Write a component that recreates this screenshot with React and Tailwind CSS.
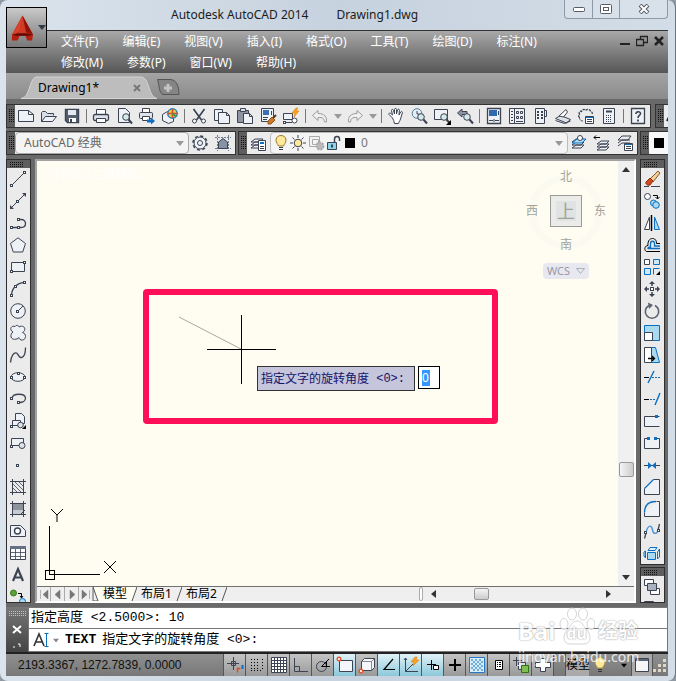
import clsx from 'clsx';

const INK = '#3c4352';
const BLUE = '#0a6fc2';
const SKY = '#a9daf0';
const PALE = '#eef1f5';

function Icon({ children, stroke = INK }) {
  return (
    <svg width="16" height="16" viewBox="0 0 16 16" fill="none" stroke={stroke} className="shrink-0 overflow-visible" aria-hidden="true">
      {children}
    </svg>
  );
}

// small square used as a grip handle on drawing tools
function Node({ x, y, color = INK, fill = '#fff' }) {
  return <rect x={Math.floor(x) - 0.5} y={Math.floor(y) - 0.5} width="2" height="2" stroke={color} fill={fill} />;
}

const lens = (
  <>
    <circle cx="10" cy="9" r="3.3" fill="#d5e9e8" />
    <path d="M12.5 11.5l3.500 4" strokeWidth="2" />
  </>
);

const standardTools = [
  { name: 'New', icon: <path d="M.5 2.500h10l5 4v7H.5z M10.500 2.500v4h5" fill={PALE} /> },
  { name: 'Open', icon: <><path d="M.5 13.500v-9l1-1h3l2 2h6v2" fill="#d7dde5" /><path d="M.5 13.500l4-5h11l-4 5z" fill={PALE} /></> },
  { name: 'Save', icon: <><path d="M1.500 1.500h13v13h-11l-2-2z" fill="#566073" strokeWidth="1.400" /><path d="M4 2h8v5H4z" fill="#e6eaf0" stroke="none" /><path d="M5 10h7v4H5z" fill="#fff" stroke="none" /><path d="M7 11v3" strokeWidth="2" /></> },
  null,
  { name: 'Plot', icon: <><path d="M3.500 6.500v-5h9v5" fill="#fff" /><rect x=".5" y="6.500" width="15" height="6" rx="1.500" fill="#dfe3e9" strokeWidth="1.300" /><path d="M3.500 10.500h9v4h-9z" fill="#fff" /></> },
  { name: 'Plot Preview', icon: <><path d="M2.500 14.500v-14h7l4 4v10z" fill={PALE} />{lens}</> },
  { name: 'Publish', icon: <><path d="M3.500 4.500v-4h7v4" fill="#fff" /><rect x=".5" y="4.500" width="13" height="6" rx="1" fill="#dfe3e9" /><path d="M3.500 8.500h7v4h-7z" fill="#fff" /><path d="M8 11.500h4v-2l4 3.500-4 3.500v-2H8z" fill={BLUE} stroke="none" /></> },
  { name: '3DPrint', icon: <><path d="M.5 6.500l5-3 6 2v8l-5 2-6-3z" fill={PALE} /><circle cx="10.500" cy="5.500" r="4.700" fill="#eecb4c" stroke="#2a7fb8" strokeWidth="1.500" /><path d="M10.500 1v9M6 5.500h9" stroke="#d6502c" strokeWidth="1.600" /><path d="M10.500 5.500l3.500 3" stroke="#3aa04a" strokeWidth="2" /></> },
  null,
  { name: 'Cut', icon: <><path d="M2.500 1l8 11M13.500 1l-8 11" strokeWidth="1.700" /><circle cx="3.500" cy="13" r="2" fill="#fff" /><circle cx="12.500" cy="13" r="2" fill="#fff" /></> },
  { name: 'Copy', icon: <><path d="M.5 1.500h8v11h-8z" fill={PALE} /><path d="M4.500 4.500h8l3 3v8h-11z M12.500 4.500v3h3" fill={PALE} /></> },
  { name: 'Paste', icon: <><path d="M.5 2.500h11v12H.5z" fill="#8d95a3" /><path d="M3.500.5h5v3h-5z" fill="#dfe3e9" /><path d="M6.500 5.500h6l3 3v7h-9z M12.500 5.500v3h3" fill={PALE} /></> },
  { name: 'Match Properties', icon: <><path d="M1.500.5h12v13h-12z" fill={PALE} /><path d="M3 2h6v5H3z" fill="#3c6fb0" stroke="none" /><path d="M11.500 3v4M3 9.500h5M3 11.500h4" /><path d="M8 13l4-4 3 3-4 4H8z" fill="#c97a2c" stroke="#9a5517" /><path d="M13 10l3-3" stroke="#5a3a1c" strokeWidth="2" /></> },
  { name: 'Block Editor', icon: <><path d="M.5 5.500h9v6h-9z" fill={PALE} /><circle cx="11.500" cy="12.500" r="2.500" fill="#fff" /><Node x="1" y="14" /><path d="M3 14.500h6" /><path d="M13 0l-4 5h3l-1 4 5-6h-3l2-3z" fill="#f8a51b" stroke="#e07c10" strokeWidth=".6" /></> },
  null,
  { name: 'Undo', icon: <path d="M6 2.500l-5.500 5 5.500 5v-3c5-.5 6 1 6.500 4.500h2c.5-5-2-8.500-8.500-8.500z" stroke="#9a9a9a" fill="#f1f1f1" /> },
  'caret',
  { name: 'Redo', icon: <path d="M10 2.500l5.500 5-5.500 5v-3c-5-.5-6 1-6.500 4.500h-2C1 9 3.500 5.500 10 5.500z" stroke="#9a9a9a" fill="#f1f1f1" /> },
  'caret',
  null,
  { name: 'Pan', icon: <path d="M4.500 10L1 6.500c-.8-1 .8-2 1.800-1L4.500 7 3.500 2.500c0-1.500 1.800-1.500 2 0L6.500 6V1.500c0-1.500 2-1.500 2 0V6l1-4c.4-1.300 2-1 1.900.3L11 7l1.700-3c.8-1 2.100-.3 1.700.8L12.500 11c-.5 2-1.500 2.500-2 4.500h-4c-.5-2-1-4-2-5.500z" fill="#fff" /> },
  { name: 'Zoom Realtime', icon: <><circle cx="6" cy="5.500" r="4.800" fill="#e3eef6" stroke="#5c7a94" /><path d="M6 3v3h2.500" />{lens}</> },
  { name: 'Zoom Window', icon: <><path d="M.5 1.500h13v10H.5z" fill={PALE} />{lens}<path d="M17 12v5h-5z" fill="#000" stroke="none" /></> },
  { name: 'Zoom Previous', icon: <><path d="M5 1L.5 5 5 9V6.500h5v-3H5z" fill="#8d95a3" />{lens}</> },
  null,
  { name: 'Properties', icon: <><path d="M1.500.5h13v15h-13z" fill={PALE} strokeWidth="1.300" /><path d="M3 2h8v6H3z" fill="#2f6ab0" stroke="none" /><path d="M12.500 3v4" /><path d="M3 12.500h4M9 12.500h4M8 11v3" /></> },
  { name: 'DesignCenter', icon: <><path d="M.5.5h15v15H.5z M5.500 1v14" fill={PALE} /><path d="M2 3.500h2M2 6.500h2M2 9.500h2M2 12.500h2" /><path d="M7.500 3.500h2v2h-2zM11.500 3.500h2v2h-2zM7.500 8.500h2v2h-2zM11.500 8.500h2v2h-2z" /><path d="M7 13.500h7" /></> },
  { name: 'Tool Palettes', icon: <><path d="M3.500.5h9v15h-9zM12.500 2.500h2v6h-2" fill={PALE} /><path d="M5 4h2M9 4h2M5 7h2M9 7h2M5 10h2M9 10h2" strokeWidth="2" /></> },
  { name: 'Sheet Set Manager', icon: <><path d="M.5 10.500l5-3 10 4-4 3.500z" fill="#dfe3e9" /><path d="M.5 12.500l9 3 6-2.500" /><path d="M4 8l7-6.500 1.500 2.500-4 5z" fill="#fff" /></> },
  { name: 'Markup Set Manager', icon: <><path d="M1.500 9.500c-2-2 0-3 0-3-1-2 0-4 2-3 1-3 4-2 4-1 2-2 5-1 5 1 2 0 2 2 1.500 3" strokeDasharray="2.500 1" strokeWidth="1.300" /><path d="M1.500 9c0 3 1 4 4 4" strokeDasharray="2.500 1" /><path d="M7.500 8.500h8v7h-8z" fill="#fff" /><path d="M8 9.500h7" stroke={BLUE} /><path d="M9 11.500h5M9 13.500h5" /></> },
  { name: 'QuickCalc', icon: <><path d="M2.500.5h11v15h-11z" fill={PALE} /><path d="M5 3.500h6" strokeWidth="2" /><path d="M5 7.500h6M5 9.500h6M5 11.500h6M5 13.500h6" strokeDasharray="1 1" /></> },
  null,
  { name: 'Help', icon: <><path d="M1.500.5h13v15h-13z" fill={PALE} strokeWidth="1.300" /><path d="M6 6c0-3 4.500-3 4.500-.5C10.500 7.500 8 7.500 8 10" strokeWidth="1.600" /><path d="M8 11.500v2" strokeWidth="1.800" /></> },
];

const drawTools = [
  { name: 'Line', icon: <><path d="M2 14L14 2" /><Node x="1" y="14" /><Node x="14" y="1" /></> },
  { name: 'Construction Line', icon: <><path d="M1 15L15 1" /><path d="M0 16v-4l4 4zM16 0v4l-4-4z" fill={INK} stroke="none" /><Node x="7" y="8" /></> },
  { name: 'Polyline', icon: <><path d="M2 12.500h9c6 0 6-8 0-8H8" strokeWidth="1.300" /><Node x="1" y="12" /><Node x="8" y="12" /><Node x="8" y="4" /></> },
  { name: 'Polygon', icon: <path d="M8 .8l7.500 5.700-2.800 8.500H3.300L.5 6.500z" fill={PALE} /> },
  { name: 'Rectangle', icon: <><path d="M1.500 3.500h13v9h-13z" fill={PALE} /><Node x="1" y="12" /><Node x="14" y="3" /></> },
  { name: 'Arc', icon: <><path d="M1.500 14C2 7 7 2 14 1.500" strokeWidth="1.300" /><Node x="1" y="14" /><Node x="5" y="5" /><Node x="14" y="1" /></> },
  { name: 'Circle', icon: <><circle cx="8" cy="8" r="7.300" fill={PALE} /><path d="M8 8l5-5" /><Node x="7" y="8" /></> },
  { name: 'Revision Cloud', icon: <path d="M3 7C-1 5 1 0 5 1.500c1.500-2 4-1 4 .5 3-2 7 0 5.500 3.500-.5 1.500-2 2-2 2 4 1 4 7 0 7.500-2 .3-3.500-1-3.500-2.500C7 15 2 15 1 12c-.5-2 .5-4 2-5z" fill={PALE} /> },
  { name: 'Spline', icon: <path d="M.5 15.500C1 9 4 5 6.500 6c2 1 2 5 5 4.500 3-.5 4-6 4-10" strokeWidth="1.300" /> },
  { name: 'Ellipse', icon: <><ellipse cx="8" cy="8" rx="7" ry="4.300" fill={PALE} /><Node x="1" y="8" /><Node x="14" y="8" /><Node x="8" y="4" /></> },
  { name: 'Ellipse Arc', icon: <><path d="M2 7c1-5 13-5 13.500 0 0 3-3 4.500-6 4.500" strokeWidth="1.300" /><Node x="1" y="7" /><Node x="8" y="11" /></> },
  { name: 'Insert Block', icon: <><path d="M5.500 9V.5h6l3 3v7h-3" fill={PALE} /><path d="M2.500 7.500h8v5h-8z" fill={PALE} /><circle cx="10.500" cy="12" r="2.800" fill="#dfe3e9" /><Node x="1" y="13" /><path d="M16 12v4h-4z" fill="#000" stroke="none" /></> },
  { name: 'Make Block', icon: <><path d="M1.500 3.500h12v7h-12z" fill={PALE} /><circle cx="12" cy="10.500" r="3" fill="#dfe3e9" /><Node x="1" y="11" /></> },
  { name: 'Point', icon: <Node x="7" y="8" /> },
  { name: 'Hatch', icon: <><path d="M0 2.500h16M0 13.500h16M2.500 0v16M13.500 0v16" /><path d="M3 9l4 4M3 5l8 8M5 3l8 8M9 3l4 4" strokeWidth=".8" /></> },
  { name: 'Gradient', icon: <><path d="M3 3h10v10H3z" fill="#8c939d" stroke="none" /><path d="M3 9h10v4H3z" fill="#c7cbd1" stroke="none" /><path d="M0 2.500h16M0 13.500h16M2.500 0v16M13.500 0v16M10 14l5-5" /></> },
  { name: 'Region', icon: <><path d="M.5 2.500h10l5 5v6H.5z" fill={PALE} /><circle cx="7.500" cy="8" r="3" fill="#fff" strokeWidth="1.400" /></> },
  { name: 'Table', icon: <><path d="M.5 1.500h15v13H.5z" fill="#fff" /><path d="M0 2.500h16" strokeWidth="3" stroke="#657286" /><path d="M1 7.500h14M1 11.500h14M5.500 4v10M10.500 4v10" strokeWidth=".8" /></> },
  { name: 'Multiline Text', icon: <path d="M3 14L8 2l5 12M5 10.500h6" strokeWidth="2.200" /> },
  { name: 'Add Selected', icon: <><circle cx="3.500" cy="4" r="3" fill="#5ba33b" stroke="#3c7a22" /><path d="M8 4.500h3.500v4M10 7l1.500 2L13 7" stroke="#000" /><circle cx="12.500" cy="12.500" r="3" fill={SKY} stroke={BLUE} /></> },
];

const modifyTools = [
  { name: 'Erase', icon: <><path d="M0 15.500h5M7 15.500h9" /><path d="M6 8l8-8 2 2-7 9z" fill="#f4cf98" stroke="#85592b" /><path d="M2 11l4-4 3 3-3 4c-2 1-5-1-4-3z" fill="#cf4a1e" stroke="#8e2b0d" /></> },
  { name: 'Copy', icon: <><circle cx="3.500" cy="3.500" r="3" fill="#fff" /><path d="M9 2.500h4.500v3M11.500 4l2 2 2-2" stroke="#000" /><circle cx="9.500" cy="10" r="3" fill={SKY} stroke={BLUE} /><circle cx="12" cy="12" r="3.300" fill={SKY} stroke={BLUE} /></> },
  { name: 'Mirror', icon: <><path d="M5.500 2v12.500h-5z" fill="#fff" /><path d="M7.500 0v16" stroke="#000" strokeWidth="1.500" /><path d="M10.500 2v12.500h5z" fill={SKY} stroke={BLUE} /></> },
  { name: 'Offset', icon: <><path d="M16 14.500H3C0 14.500 0 8.500 4 8.500 3-.5 13-.5 12.500 6.500H16" stroke="#000" /><path d="M16 11.500H4.500c-1 0-1-1.500 2-1.500V6.500c0-3 4-3 4 0V9H16" stroke={BLUE} strokeWidth="1.300" /></> },
  { name: 'Array', icon: <><path d="M.5.5h5v5h-5z" fill="#fff" /><path d="M9.500.5h6v5h-6zM.5 9.500h6v6h-6z" fill="#cfeaf6" stroke={BLUE} /><path d="M9.500 15.500v-6h6" stroke={BLUE} /><path d="M16 12v4h-4z" fill="#000" stroke="none" /></> },
  { name: 'Move', icon: <><path d="M8 2v3M8 11v3M2 8h3M11 8h3" strokeWidth="1.500" /><path d="M8 0l3 3H5zM8 16l3-3H5zM0 8l3-3v6zM16 8l-3-3v6z" fill={INK} stroke="none" /><rect x="6.500" y="6.500" width="3" height="3" fill="#fff" /></> },
  { name: 'Rotate', icon: <><path d="M5 2.500A6.700 6.700 0 1 0 11 2.500" strokeWidth="1.600" stroke="#5c6370" /><path d="M4-.5l5 2.500-4 4z" fill="#5c6370" stroke="none" /></> },
  { name: 'Scale', icon: <><path d="M.5.5h15v15H.5z" fill={SKY} stroke={BLUE} /><path d="M.5 7.500h8v8h-8z" fill="#fff" /></> },
  { name: 'Stretch', icon: <><path d="M7.500.5h4l4 15h-8z" fill={SKY} stroke={BLUE} /><path d="M.5.5h7v15h-7z" fill="#fff" /><path d="M4 11.500h6M8 9l2.500 2.500L8 14" stroke="#000" strokeWidth="1.300" /></> },
  { name: 'Trim', icon: <><path d="M4 14l6-12" stroke={BLUE} strokeWidth="1.400" /><path d="M0 8.500h5" stroke="#000" /><path d="M8 8.500h8" stroke={BLUE} strokeDasharray="2 1" /></> },
  { name: 'Extend', icon: <><path d="M0 8.500h5" stroke="#000" /><path d="M6 8.500h5" stroke={BLUE} strokeDasharray="2 1" /><path d="M11 14l5-12" stroke={BLUE} strokeWidth="1.400" /></> },
  { name: 'Break at Point', icon: <><path d="M15.500 3.500H.5v10h15" fill={PALE} /><path d="M11 2h3v3h-3z" fill={BLUE} stroke="none" /></> },
  { name: 'Break', icon: <><path d="M4 3.500H.5v10h15v-10H12" fill={PALE} /><path d="M3 2h3v3H3zM10 2h3v3h-3z" fill={BLUE} stroke="none" /></> },
  { name: 'Join', icon: <><path d="M0 8.500h16" /><path d="M4 5l4 3.500L4 12zM12 5L8 8.500l4 3.500z" fill={BLUE} stroke="none" /></> },
  { name: 'Chamfer', icon: <><path d="M9.500.5h6v15H.5v-6" fill={PALE} /><path d="M.5 9.500l9-9" stroke={BLUE} strokeWidth="1.300" /></> },
  { name: 'Fillet', icon: <><path d="M12.500.5h3v15H.5v-4" fill={PALE} /><path d="M.5 11.500C.5 5 4 .5 12 .5" stroke={BLUE} strokeWidth="1.300" /></> },
  { name: 'Blend Curves', icon: <><path d="M.5 15.500L2 10M14 7l1.500-6" strokeWidth="1.300" /><path d="M2 9C5 0 8 3 8.500 7c1 5 5 4 5.500 0" stroke="#4a94dc" strokeWidth="1.400" /><Node x="1" y="9" /><Node x="14" y="7" /></> },
  { name: 'Explode', icon: <g stroke={BLUE}><path d="M3.500 7.500h8v7h-8z" fill={SKY} /><path d="M4 5.500l2-3h7l-2 3zM13.500 7l2-3v8l-2 2zM1.500 6v7L0 11V7z" fill="#dff2fa" /></g> },
];

const orderTools = [
  { name: 'Draw Order', icon: <><path d="M.5.500h9v6h-9z" fill="#fff" /><path d="M6.500 9.500h9v6h-9z" fill="#fff" /><path d="M3.500 4.500h9v7h-9z" fill="#a8b1bf" /></> },
  { name: 'Bring Above', icon: <path d="M.5.5h9v8h-9z M4.500 5.500h9v8h-9z" fill="#fff" /> },
];

const layers = (
  <path d="M1 13l4-3h8l-3 3zM1 10l4-3h8l-3 3zM1 7l4-3h8l-3 3z" fill={PALE} />
);

const statusTools = [
  { name: 'Infer Constraints', icon: <><path d="M0 6.500h12M6.500 0v13M4.500 4.500h4v4h-4z" /><path d="M10.500 15.500v-4h3" stroke="#d6502c" strokeWidth="1.500" /><path d="M15.500 8v4" stroke={BLUE} strokeWidth="2" /></> },
  { name: 'Snap Mode', icon: <path d="M2 2.500h9M2 5.500h9M2 8.500h9M2 11.500h9M2 13.500h11M13.500 2v10" strokeDasharray="1 2" stroke="#000" /> },
  { name: 'Grid Display', icon: <path d="M.5.500h15v15H.5zM.5 3.500h15M.5 6.500h15M.5 9.500h15M.5 12.500h15M3.500.5v15M6.500.5v15M9.500.5v15M12.500.5v15" fill="#fff" /> },
  { name: 'Ortho Mode', icon: <path d="M1.500 1v13.500H15M1.500 9.500h5v5" /> },
  { name: 'Polar Tracking', icon: <><circle cx="6.500" cy="9.500" r="5" /><path d="M14 2L6.500 9.500H15M11.500 5v5" stroke="#000" /></> },
  { name: 'Object Snap', on: true, icon: <><path d="M2.500 3.500h13v11h-13z" fill="#f4f6f9" /><circle cx="2" cy="2" r="1.800" fill="#fff" stroke="#e2572b" strokeWidth="1.400" /></> },
  { name: '3D Object Snap', icon: <><path d="M2.500 4.500l3-3h10v9l-3 3h-10z" fill="#f4f6f9" /><path d="M2.500 4.500h10v9M12.500 4.500l3-3" strokeWidth=".6" /><circle cx="2" cy="14" r="1.800" fill="#fff" stroke="#e2572b" strokeWidth="1.400" /></> },
  { name: 'Object Snap Tracking', on: true, icon: <path d="M12 2L3 12.500h11" stroke="#000" strokeWidth="1.200" /> },
  { name: 'Dynamic UCS', on: true, icon: <><path d="M2.500 1v13.500H15M2.500 14.500L10 7M1 3l1.500-2L4 3" /><path d="M12 0L8 5h3l-1 4 6-6h-3l1-3z" fill="#f8a51b" stroke="#e07c10" strokeWidth=".6" /></> },
  { name: 'Dynamic Input', on: true, icon: <><path d="M2 7.500h9M6.500 3v10" stroke="#000" /><path d="M8.500 8.500h5v4h-5z" stroke="#000" fill="#fff" /></> },
  { name: 'Lineweight', icon: <path d="M2 8h12M8 2v12" stroke="#000" strokeWidth="2" /> },
  { name: 'Transparency', icon: <><path d="M.5.5h15v15H.5z" fill="#d9eefb" stroke="#2878c8" /><path d="M2 3h12M2 7h12M2 11h12" strokeWidth="2" strokeDasharray="2" stroke="#6faedb" /><path d="M4 5h10M4 9h10M4 13h10" strokeWidth="2" strokeDasharray="2" stroke="#6faedb" /></> },
  { name: 'Quick Properties', icon: <><path d="M4.500 3.500h7v9h-7z" fill="#fff" stroke="#000" /><path d="M6 5.500h1M8 5.500h2M6 7.500h1M8 7.500h2M6 9.500h1M8 9.500h2" stroke="#000" /></> },
  { name: 'Selection Cycling', icon: <><path d="M0 3.500h9M3.500 0v9" /><path d="M5.500 5.500h7v7h-7z" fill="#dfe3e9" /><path d="M8.500 8.500h7v7h-7z" fill="#7fbf52" stroke="#2e7317" /></> },
  { name: 'Annotation Monitor', icon: <path d="M5.500 1.500h5v4h5v5h-5v4h-5v-4h-5v-5h5z" fill="#fff" /> },
];

function Caret({ className }) {
  return (
    <svg width="8" height="5" viewBox="0 0 8 5" className={clsx('shrink-0', className)} aria-hidden="true">
      <path d="M0 0h8L4 5z" fill="currentColor" />
    </svg>
  );
}

function Grip({ horizontal }) {
  return (
    <div className={clsx('flex shrink-0 items-center bg-[#5e5e5e]', horizontal ? 'h-2 pl-[3px]' : 'w-2 pl-0.5')}>
      <svg width={horizontal ? 14 : 5} height={horizontal ? 5 : 14} aria-hidden="true">
        {horizontal ? (
          <path d="M0 .5h14M0 2.500h14M0 4.500h14" stroke="#111" strokeDasharray="1 1" />
        ) : (
          <path d="M.5 0v14M2.500 0v14M4.500 0v14" stroke="#111" strokeDasharray="1 1" />
        )}
      </svg>
    </div>
  );
}

function ToolButton({ name, children, className = 'h-full w-[23px] pl-[3px]' }) {
  return (
    <button type="button" aria-label={name} className={clsx('flex shrink-0 items-center', className)}>
      {children}
    </button>
  );
}

function Toolbar({ children, className }) {
  return (
    <div className={clsx('flex h-6 border border-[#333] bg-[#ebebeb]', className)}>
      <Grip />
      {children}
    </div>
  );
}

function Palette({ tools, className }) {
  return (
    <div className={clsx('flex w-[25px] flex-col overflow-hidden border border-[#2e2e2e] bg-[#ebebeb]', className)}>
      <Grip horizontal />
      {tools.map((tool) => (
        <ToolButton key={tool.name} name={tool.name} className="h-[22px] w-full pl-[3px]">
          <Icon>{tool.icon}</Icon>
        </ToolButton>
      ))}
    </div>
  );
}

function TitleBar() {
  return (
    <header className="relative flex h-[30px] shrink-0 justify-between">
      <h1 className="flex gap-7 pt-[7px] pl-[165px] text-xs leading-4 text-[#1c1c1c]">
        <span>Autodesk AutoCAD 2014</span>
        <span>Drawing1.dwg</span>
      </h1>
      <div className="flex h-[19px] rounded-b border border-t-0 border-[#8d99a6] bg-[#d8e0e9]">
        <button type="button" aria-label="Minimize" className="flex w-7 items-center justify-center border-r border-[#8d99a6]">
          <svg width="12" height="6"><rect x=".5" y="1.500" width="11" height="4" rx="1" fill="#fff" stroke="#565c68" /></svg>
        </button>
        <button type="button" aria-label="Restore" className="flex w-[27px] items-center justify-center border-r border-[#8d99a6]">
          <svg width="12" height="10" fill="#fff" stroke="#565c68"><rect x=".5" y=".5" width="11" height="9" rx="1" /><rect x="3.500" y="3.500" width="5" height="3" /></svg>
        </button>
        <button type="button" aria-label="Close" className="flex w-[47px] items-center justify-center">
          <svg width="12" height="10" viewBox="0 0 12 10"><path d="M2 1l8 8M10 1L2 9" stroke="#565c68" strokeWidth="4" /><path d="M2.500 1.500l7 7M9.500 1.500l-7 7" stroke="#fff" strokeWidth="2" /></svg>
        </button>
      </div>
      <button type="button" aria-label="Application menu" className="absolute top-[7px] left-0 z-10 flex h-[41px] w-[41px] items-center gap-1 border border-black bg-linear-to-b from-[#c9c9c9] to-[#787878] pl-1">
        <svg width="24" height="26" viewBox="0 0 24 26" aria-hidden="true">
          <path d="M12 0l11 20-1 6h-5l-2-5H9l-2 5H1v-6z" fill="#b3200f" />
          <path d="M12 0L1 20l8-3z" fill="#d9432b" />
          <path d="M12 0l4 17 7 3z" fill="#8d1208" />
          <path d="M12 0L9 17l-3 3 6-1 4 1z" fill="#e8523a" opacity=".55" />
          <path d="M1 20l8-1.500h6l8 1.500-5 1H6z" fill="#5f0a04" />
        </svg>
        <Caret className="text-[#2f3d4a]" />
      </button>
    </header>
  );
}

const menus = ['文件(F)', '编辑(E)', '视图(V)', '插入(I)', '格式(O)', '工具(T)', '绘图(D)', '标注(N)', '修改(M)', '参数(P)', '窗口(W)', '帮助(H)'];

function MenuBar() {
  return (
    <div className="flex shrink-0 border-t border-[#333] bg-linear-to-b from-[#a9a9a9] to-[#565656]">
      <nav className="flex flex-1 flex-wrap gap-x-6 pr-12 pl-[55px] text-xs leading-[21px] text-white">
        {menus.map((menu) => (
          <button type="button" key={menu}>{menu}</button>
        ))}
      </nav>
      <div className="flex h-5 w-12 shrink-0 items-center gap-1.5 text-[#222]">
        <button type="button" aria-label="Minimize drawing"><svg width="10" height="12"><path d="M0 9h10" stroke="currentColor" strokeWidth="2" /></svg></button>
        <button type="button" aria-label="Restore drawing"><svg width="12" height="12" fill="none" stroke="currentColor"><path d="M4.500 4V1.500h7v6H8" strokeWidth="1.300" /><path d="M.5 4.500h7v6h-7z" strokeWidth="1.300" /></svg></button>
        <button type="button" aria-label="Close drawing"><svg width="10" height="10"><path d="M1 1l8 8M9 1L1 9" stroke="currentColor" strokeWidth="2.500" /></svg></button>
      </div>
    </div>
  );
}

function FileTabs() {
  return (
    <div className="flex h-[26px] shrink-0 items-end bg-linear-to-b from-[#a4a4a4] to-[#8b8b8b] pl-[15px]">
      <div className="relative flex h-[23px] w-[136px] items-center justify-between pr-4 pl-[17px]">
        <svg viewBox="0 0 136 23" preserveAspectRatio="none" className="absolute inset-0 h-full w-full" aria-hidden="true">
          <path d="M0 22.500C9 22 8 3 15 1h106c8 2 6 20 15 21.500z" fill="#bdbdbd" stroke="#d4d4d4" />
        </svg>
        <span className="relative text-xs leading-4 text-black">Drawing1*</span>
        <button type="button" aria-label="Close tab" className="relative"><svg width="8" height="8"><path d="M1 1l6 6M7 1L1 7" stroke="#777" strokeWidth="2" /></svg></button>
      </div>
      <button type="button" aria-label="New tab" className="mb-1">
        <svg width="23" height="16" viewBox="0 0 23 16"><path d="M.5.5H13c6 0 9 6 9 15H6C2 15 2 4 .5.500z" fill="#858585" stroke="#555" /><path d="M11 5v8M7 9h8" stroke="#c4c4c4" strokeWidth="3" /></svg>
      </button>
    </div>
  );
}

function StandardToolbar() {
  return (
    <div className="flex shrink-0 gap-1">
      <Toolbar>
        {standardTools.map((tool, i) => {
          if (tool === null) return <div key={i} className="mx-0.5 my-1 w-0.5 shrink-0 border-l border-[#777]" />;
          if (tool === 'caret') {
            return <ToolButton key={i} name="History" className="h-full w-3 pl-0.5"><Caret className="text-[#999]" /></ToolButton>;
          }
          return <ToolButton key={i} name={tool.name}><Icon>{tool.icon}</Icon></ToolButton>;
        })}
      </Toolbar>
      <Toolbar className="min-w-0 flex-1 overflow-hidden border-r-0">
        <ToolButton name="Text Style">
          <Icon><path d="M0 13L5 3l5 10M2 9.500h6" strokeWidth="2" stroke="#222" /></Icon>
        </ToolButton>
      </Toolbar>
    </div>
  );
}

function LayerToolbar() {
  return (
    <div className="flex shrink-0 gap-0.5">
      <Toolbar>
        <div className="flex w-[174px] items-center rounded border border-[#aaa] bg-[#f4f4f4] pr-1">
          <select aria-label="Workspace" className="min-w-0 flex-1 appearance-none bg-transparent pl-2 text-xs text-[#666] outline-none">
            <option>AutoCAD 经典</option>
          </select>
          <Caret className="text-[#999]" />
        </div>
        <ToolButton name="Workspace Settings">
          <Icon><circle cx="8" cy="8" r="7" strokeWidth="1.500" strokeDasharray="3 2.500" /><circle cx="8" cy="8" r="6" fill={PALE} /><circle cx="8" cy="8" r="2.500" /></Icon>
        </ToolButton>
        <ToolButton name="My Workspace">
          <Icon><path d="M0 2.500h16M0 13.500h16M2.500 0v16M13.500 0v16" strokeDasharray="2 1" stroke="#6f7c8f" /><path d="M3.500 13.500V7L8 3.500 12.500 7v6.500z" fill="#8792a3" /></Icon>
        </ToolButton>
      </Toolbar>
      <Toolbar className="flex-1">
        <ToolButton name="Layer Properties">
          <Icon>{layers}<path d="M8.500 5.500h7v10h-7z" fill="#fff" /><path d="M10 8h4" stroke={BLUE} strokeWidth="2" /><path d="M10 11.500h4M10 13.500h4" /></Icon>
        </ToolButton>
        <div className="flex min-w-0 flex-1 items-center gap-0.5 rounded border border-[#bbb] bg-[#f4f4f4] pr-1 pl-0.5">
          <Icon><path d="M5.500 11C5 9 3 8 3 5c0-6 10-6 10 0 0 3-2 4-2.500 6z" fill="#ffe99a" stroke="#9a7b2a" /><path d="M6 12.500h4M6 14.500h4" /></Icon>
          <Icon><circle cx="7" cy="8" r="3.800" fill="#ffe99a" /><path d="M7 0v3M7 13v3M-1 8h3M12 8h3M1.500 2.500l2 2M10.500 11.500l2 2M12.500 2.500l-2 2M1.500 13.500l2-2" /></Icon>
          <Icon stroke="#aaa"><path d="M.5 1.500h10v10H.5zM3.500 4.500h6v5h-6z" /><circle cx="11" cy="11" r="3.500" fill="#bbb" strokeDasharray="2 1" strokeWidth="2" /></Icon>
          <Icon><path d="M.5 7.500h9v7h-9z" fill="#8ed3ec" /><path d="M7.500 7V4c0-3.500 5-3.500 5 0v2" strokeWidth="1.500" /><path d="M5 9.500v3" strokeWidth="2" /></Icon>
          <span className="size-2.5 shrink-0 bg-black" />
          <select aria-label="Layer" className="min-w-0 flex-1 appearance-none bg-transparent pl-1 text-xs text-[#777] outline-none">
            <option>0</option>
          </select>
          <Caret className="text-[#999]" />
        </div>
        <ToolButton name="Make Object's Layer Current">
          <Icon>{layers}<path d="M1 8l5-4h9l-4 4z" fill={SKY} stroke={BLUE} /><circle cx="9" cy="3" r="2.500" fill="#fff" /></Icon>
        </ToolButton>
        <ToolButton name="Layer Previous">
          <Icon><g transform="translate(2 2)">{layers}</g><path d="M0 2.500h6M2 .5L0 2.500l2 2" stroke="#000" /></Icon>
        </ToolButton>
        <ToolButton name="Layer States">
          <Icon><path d="M1 11l4-3h8M1 8l4-3h8M1 5l4-4h9l-3 4z" /><path d="M7.500 8.500h8v7h-8z" fill="#fff" /><path d="M8 9.500h7" stroke={BLUE} /><path d="M9 11.500h5M9 13.500h5" /></Icon>
        </ToolButton>
      </Toolbar>
      <Toolbar className="w-7 border-r-0">
        <button type="button" aria-label="Color" className="flex flex-1 items-center justify-center rounded-l bg-[#f8f8f8]">
          <span className="size-2.5 bg-black" />
        </button>
      </Toolbar>
    </div>
  );
}

function ViewCube() {
  return (
    <div className="absolute top-2 right-3 flex w-20 flex-col items-center text-xs leading-4 text-[#a3a39b]">
      <div className="absolute top-1.5 left-[3px] size-[74px] rounded-full border-[7px] border-[#fbfaf0]" />
      <span className="relative">北</span>
      <div className="relative my-2.5 flex w-full items-center justify-between">
        <span>西</span>
        <span className="flex size-8 items-center justify-center border border-[#999] bg-[#ebebe8]">
          <span className="flex size-5 items-center justify-center bg-[#dfe3e3] text-lg leading-5">上</span>
        </span>
        <span>东</span>
      </div>
      <span className="relative">南</span>
      <button type="button" className="relative mt-2.5 flex h-4 items-center gap-1.5 rounded bg-[#e8e8f0] px-1 text-[11px] leading-4 text-[#9898a4]">
        WCS
        <svg width="9" height="6"><path d="M.5.500h8l-4 5z" fill="none" stroke="#b0b0b8" /></svg>
      </button>
    </div>
  );
}

function DrawingArea() {
  return (
    <div className="relative min-w-0 flex-1 overflow-hidden bg-[#fffdf1]">
      <p className="absolute top-1.5 left-1 text-xs leading-4 text-white">[−][俯视][二维线框]</p>
      <div className="absolute top-[128px] left-[106px] h-[135px] w-[355px] rounded-sm border-[6px] border-[#ff0f58]" />
      <svg width="98" height="70" className="absolute top-[154px] left-[142px]" aria-hidden="true" shapeRendering="crispEdges">
        <path d="M0 2l62 32" stroke="#aaa69c" shapeRendering="auto" />
        <path d="M28 34.500h69M62.500 0v69" stroke="#000" />
      </svg>
      <label htmlFor="angle" className="absolute top-[205px] left-[220px] flex h-[25px] w-[158px] items-center border border-[#333] bg-[#c5c5dc] pl-[3px] text-xs whitespace-pre text-[#14146a]">
        指定文字的旋转角度<span className="font-['Liberation_Mono']"> &lt;0&gt;:</span>
      </label>
      <div className="absolute top-[205px] left-[381px] flex h-[23px] w-[22px] items-center border border-black bg-white pl-[3px]">
        <input id="angle" defaultValue="0" className="h-4 w-2 bg-[#3399ff] text-xs text-white outline-none" />
      </div>
      <ViewCube />
      <svg width="80" height="80" className="absolute bottom-0.5 left-1.5" aria-hidden="true" fill="none" stroke="#000">
        <path d="M2.500 66.500h9v9h-9zM6.500 70.500v-49M6.500 70.500h50" shapeRendering="crispEdges" />
        <path d="M8 5l6 6 6-6M14 11v7M61 57l12 12M73 57L61 69" />
      </svg>
    </div>
  );
}

function LayoutTabs() {
  return (
    <div className="flex h-[15px] shrink-0 border-t border-[#707070] bg-[#efefef]">
      {['M3.500 2v9M11 2v9L6 6.500z', 'M9 2v9L4 6.500z', 'M5 2v9l5-4.500z', 'M10.500 2v9M3 2v9l5-4.500z'].map((d) => (
        <button type="button" key={d} aria-label="Scroll tabs" className="w-3.5 border-r border-[#aaa]">
          <svg width="13" height="13"><path d={d} fill="#777" stroke="#777" strokeWidth=".5" /></svg>
        </button>
      ))}
      {['模型', '布局1', '布局2'].map((tab, i) => (
        <button
          type="button"
          key={tab}
          className={clsx('flex items-center gap-1 pl-1 text-xs leading-[14px] text-black', i === 0 && 'bg-[#fffdf1]')}
        >
          {i === 0 && <svg width="6" height="14" className="-ml-1"><path d="M0 0l5 14H0z" fill="#efefef" stroke="#555" /></svg>}
          {tab}
          <svg width="6" height="14"><path d="M6 0L1 14h5z" fill="#efefef" stroke="none" /><path d="M6 0L1 14" stroke="#555" /></svg>
        </button>
      ))}
      <div className="flex-1" />
      <div className="w-1 rounded border border-[#aaa] bg-white" />
      <div className="flex w-[194px] items-center justify-between pr-1.5 pl-2">
        <svg width="5" height="8"><path d="M5 0v8L0 4z" fill="#333" /></svg>
        <span className="ml-5 h-3 w-[15px] rounded-xs border border-[#999] bg-linear-to-b from-[#f5f5f5] to-[#ccc]" />
        <span className="w-20" />
        <svg width="5" height="8"><path d="M0 0v8l5-4z" fill="#333" /></svg>
      </div>
      <div className="w-[17px] shrink-0" />
    </div>
  );
}

function Workspace() {
  return (
    <div className="mt-px flex min-h-0 flex-1 gap-1 pr-[3px]">
      <Palette tools={drawTools} />
      <main className="flex min-w-0 flex-1 flex-col border-2 border-[#a2a2a2] border-r-white border-b-white">
        <div className="flex min-h-0 flex-1">
          <DrawingArea />
          <div className="flex w-4 shrink-0 flex-col items-center bg-[#f0f0f0] py-1.5">
            <svg width="8" height="5"><path d="M0 5l4-5 4 5z" fill="#333" /></svg>
            <div className="flex-1" />
            <div className="h-[15px] w-[15px] rounded-xs border border-[#999] bg-linear-to-r from-[#f5f5f5] to-[#ccc]" />
            <div className="h-[98px] shrink-0" />
            <Caret className="text-[#333]" />
          </div>
        </div>
        <LayoutTabs />
      </main>
      <div className="flex w-[25px] shrink-0 flex-col gap-0.5 overflow-hidden">
        <Palette tools={modifyTools} className="shrink-0" />
        <Palette tools={orderTools} className="min-h-0 flex-1" />
      </div>
    </div>
  );
}

function CommandLine() {
  return (
    <section className="mt-px flex h-[45px] shrink-0 text-[13px] text-black">
      <div className="flex w-[22px] flex-col items-center justify-between bg-linear-to-b from-[#777] to-[#444] py-1 text-white">
        <svg width="17" height="5" aria-hidden="true"><path d="M0 .5h17M0 2.500h17M0 4.500h17" stroke="#c4c4c4" strokeDasharray="1 1" /></svg>
        <button type="button" aria-label="Close command line"><svg width="10" height="9"><path d="M1 1l8 7M9 1L1 8" stroke="#fff" strokeWidth="2" /></svg></button>
        <svg width="8" height="5"><path d="M0 4h2M5 1h2v3" stroke="#fff" fill="none" /></svg>
      </div>
      <div className="flex min-w-0 flex-1 flex-col border border-[#777] bg-white font-['Liberation_Mono','Noto_Sans_CJK_SC',monospace]">
        <p className="h-[21px] border-b border-[#777] pl-0.5 leading-5">指定高度 &lt;2.5000&gt;: 10</p>
        <p className="flex flex-1 items-center pl-1">
          <svg width="16" height="16" viewBox="0 0 16 16" fill="none" aria-hidden="true">
            <path d="M1 14L6 2l5 12M3 10h6" stroke="#333" strokeWidth="1.600" />
            <path d="M11.500 1.500h4M13.500 1.500v13M11.500 14.500h4" stroke={BLUE} />
          </svg>
          <Caret className="mx-1 w-1.5 text-[#888]" />
          <b className="mr-1.5 ml-0.5">TEXT</b>
          指定文字的旋转角度 &lt;0&gt;:
        </p>
      </div>
    </section>
  );
}

function StatusBar() {
  return (
    <footer className="flex h-6 shrink-0 border-t-2 border-[#222] bg-linear-to-b from-[#909090] to-[#787878]">
      <output className="min-w-0 flex-1 truncate pl-3 font-['Liberation_Sans'] text-xs leading-[22px] text-[#111]">2193.3367, 1272.7839, 0.0000</output>
      {statusTools.map((tool) => (
        <button
          type="button"
          key={tool.name}
          aria-label={tool.name}
          aria-pressed={!!tool.on}
          className={clsx(
            'flex w-[22px] shrink-0 items-center border-l border-[#555] bg-linear-to-b pl-[3px]',
            tool.on ? 'from-[#e0f2f8] to-[#8cc8da]' : 'from-[#c4c4c4] to-[#999]',
          )}
        >
          <Icon>{tool.icon}</Icon>
        </button>
      ))}
      <div className="w-3 border-l border-[#555]" />
      <button type="button" className="w-6 shrink-0 border-l border-[#555] bg-[#aaa] text-xs whitespace-nowrap text-black">模型</button>
      <button type="button" aria-label="Isolate Objects" className="flex w-[22px] shrink-0 items-center justify-center">
        <Icon><path d="M5.500 11C5 9 3 8 3 5c0-6 10-6 10 0 0 3-2 4-2.500 6z" fill="#ffe99a" stroke="#b39643" /><path d="M6 12.500h4M6 14.500h4" stroke="#333" /></Icon>
      </button>
      <button type="button" aria-label="Status bar menu" className="flex w-5 shrink-0 items-center justify-end pr-1"><Caret className="w-1.5 text-black" /></button>
      <button type="button" aria-label="Clean Screen" className="flex w-[22px] shrink-0 items-center justify-center border-x border-[#555] bg-[#aaa]">
        <Icon><path d="M1.500 1.500h13v13h-13z" fill="#f6f6f6" /><path d="M2 3h12" strokeWidth="2" stroke="#5a6475" /></Icon>
      </button>
      <svg width="15" height="20" className="shrink-0" aria-hidden="true">
        <path d="M10 10h3v3h-3zM10 15h3v3h-3zM5 15h3v3H5zM0 15h3v3H0zM5 10h3v3H5zM10 5h3v3h-3z" fill="#ddd8c8" />
      </svg>
    </footer>
  );
}

function Watermark() {
  return (
    <div className="pointer-events-none absolute right-[37px] bottom-4 z-20 w-[120px] text-white opacity-80">
      <div className="flex items-end justify-between pb-1 [text-shadow:0_0_1px_#888,0_0_2px_#aaa]">
        <span className="text-2xl leading-7 font-bold">Bai</span>
        <span className="relative flex h-[38px] w-8 items-end justify-center">
          <svg width="36" height="38" viewBox="0 0 36 38" className="absolute bottom-0 -left-0.5" fill="#fff" stroke="#ccc">
            <ellipse cx="13" cy="7" rx="4.500" ry="6" />
            <ellipse cx="24" cy="7" rx="4.500" ry="6" />
            <ellipse cx="5" cy="17" rx="4" ry="5.500" />
            <ellipse cx="32" cy="17" rx="4" ry="5.500" />
            <path d="M18 14c5 0 6 5 10 9s5 14-3 14H11C3 37 4 27 8 23s5-9 10-9z" />
          </svg>
          <span className="relative pb-0.5 text-base leading-5 font-bold">du</span>
        </span>
        <span className="text-xl leading-7 font-bold">经验</span>
      </div>
      <div className="text-sm leading-4">jingyan.baidu.com</div>
    </div>
  );
}

export default function App() {
  return (
    <div className="h-screen overflow-hidden bg-[#8f99a3]">
      <div className="relative flex h-full flex-col rounded-lg border-r border-[#6b7580] bg-linear-to-r from-[#dbe4ed] via-[#c6d2de] to-[#d3dde8] pr-[7px] pb-[5px] pl-1.5 font-['Noto_Sans','Noto_Sans_CJK_SC',sans-serif]">
        <TitleBar />
        <MenuBar />
        <FileTabs />
        <div className="flex min-h-0 flex-1 flex-col gap-[3px] bg-[#696969] pt-[5px]">
          <StandardToolbar />
          <LayerToolbar />
          <Workspace />
          <CommandLine />
        </div>
        <StatusBar />
        <Watermark />
      </div>
    </div>
  );
}
